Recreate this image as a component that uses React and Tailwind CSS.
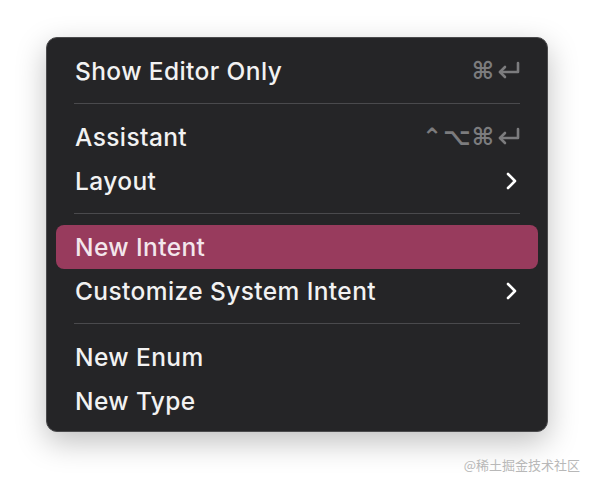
import React from 'react';

const ReturnKey = () => (
  <svg width="25" height="22" viewBox="0 0 25 22" fill="none" stroke="currentColor" strokeWidth="2.6" strokeLinecap="round" strokeLinejoin="round">
    <path d="M22 3 V12 H4" />
    <path d="M9 7 L4 12 L9 17" />
  </svg>
);

const Chevron = () => (
  <svg width="12" height="18" viewBox="0 0 12 18" fill="none" stroke="currentColor" strokeWidth="2.6" strokeLinecap="round" strokeLinejoin="round">
    <path d="M3 2 L10 9 L3 16" />
  </svg>
);

const Item = ({ label, keys, submenu, active }) => (
  <div
    className={`flex items-center justify-between h-[44px] pl-[19px] pr-[17px] rounded-lg ${
      active ? 'bg-[#983b5d] text-[#f3e6ec]' : 'text-[#f2f2f2]'
    }`}
  >
    <span className="text-[24.5px] leading-none font-medium tracking-[0.4px]">{label}</span>
    {keys && (
      <span className="flex items-center gap-[1px] text-[#7c7c7e]">
        <span className="text-[24px] leading-none font-bold tracking-[1px] font-['DejaVu_Sans',sans-serif]">{keys}</span>
        <ReturnKey />
      </span>
    )}
    {submenu && (
      <span className="text-white pr-[4px]">
        <Chevron />
      </span>
    )}
  </div>
);

const Separator = () => (
  <div className="h-[22px] pt-[10px] px-[18px]">
    <div className="h-px bg-[#4a4a4d]" />
  </div>
);

const App = () => {
  return (
    <div className="w-[594px] h-[486px] bg-white relative overflow-hidden font-['Inter','Liberation_Sans',sans-serif]">
      <div className="pt-[37px] pl-[46px]">
        <div className="w-[502px] h-[395px] rounded-[11px] border border-[#4b4b4d] bg-[#252527] pt-[11px] px-[9px] shadow-[0_10px_30px_rgba(0,0,0,0.25)]">
          <Item label="Show Editor Only" keys="⌘" />
          <Separator />
          <Item label="Assistant" keys="⌃⌥⌘" />
          <Item label="Layout" submenu />
          <Separator />
          <Item label="New Intent" active />
          <Item label="Customize System Intent" submenu />
          <Separator />
          <Item label="New Enum" />
          <Item label="New Type" />
        </div>
      </div>
      <div className="absolute right-[14px] bottom-[12px] text-[13px] text-[#b8b8b8] font-['Noto_Sans_CJK_SC',sans-serif]">
        @稀土掘金技术社区
      </div>
    </div>
  );
};

export default App;
